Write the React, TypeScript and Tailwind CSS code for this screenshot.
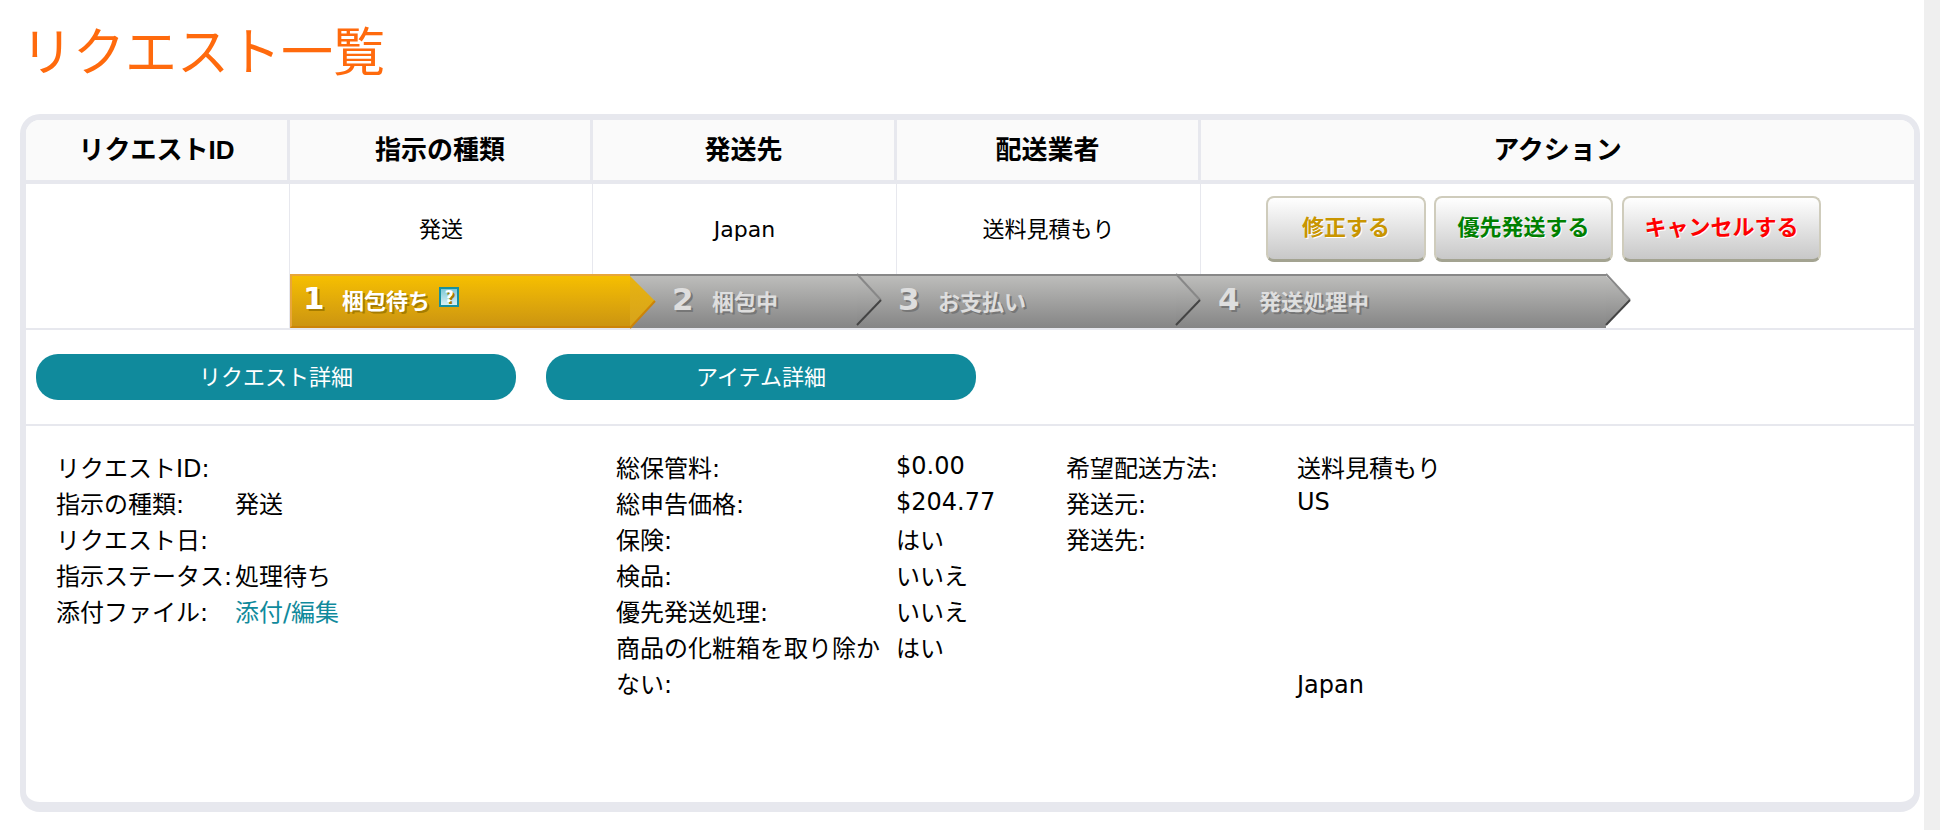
const fontBase = "font-['DejaVu_Sans','Noto_Sans_CJK_JP',sans-serif]"

const steps = [
    { n: '1', label: '梱包待ち', active: true, width: 'w-[340px]', pad: 'pl-[11px]', numW: 'w-[39px]' },
    { n: '2', label: '梱包中', active: false, width: 'w-[227px]', pad: 'pl-[42px]', numW: 'w-[40px]' },
    { n: '3', label: 'お支払い', active: false, width: 'w-[319px]', pad: 'pl-[41px]', numW: 'w-[40px]' },
    { n: '4', label: '発送処理中', active: false, width: 'w-[430px]', pad: 'pl-[42px]', numW: 'w-[41px]' },
]

const leftRows = [
    ['リクエストID:', ''],
    ['指示の種類:', '発送'],
    ['リクエスト日:', ''],
    ['指示ステータス:', '処理待ち'],
]

const midRows = [
    ['総保管料:', '$0.00', true],
    ['総申告価格:', '$204.77', true],
    ['保険:', 'はい', false],
    ['検品:', 'いいえ', false],
    ['優先発送処理:', 'いいえ', false],
    ['商品の化粧箱を取り除かない:', 'はい', false],
]

function StepArrow({ id, active }: { id: string; active: boolean }) {
    return (
        <svg className="absolute left-full -top-[2px] z-10 overflow-visible" width="26" height="56" viewBox="0 0 26 56">
            <defs>
                <linearGradient id={id} x1="0" y1="0" x2="0" y2="1">
                    <stop offset="0" stopColor={active ? '#e8b410' : '#bdbdbb'} />
                    <stop offset="1" stopColor={active ? '#d6a21c' : '#868686'} />
                </linearGradient>
            </defs>
            {active ? (
                <>
                    <polygon points="0,2 25,27 0,54" fill={`url(#${id})`} />
                    <polyline points="25,27 0,54" fill="none" stroke="#cc8408" strokeWidth="2" />
                </>
            ) : (
                <>
                    <polygon points="0,2 24,26 0,51" fill={`url(#${id})`} />
                    <polyline points="0,0 24,26" fill="none" stroke="#888888" strokeWidth="2" />
                    <polyline points="24,26 0,51" fill="none" stroke="#444444" strokeWidth="2" />
                </>
            )}
        </svg>
    )
}

function HelpIcon() {
    return (
        <span className="ml-[9px] -translate-y-[4px] w-[20px] h-[20px] border-[2px] border-[#17909f] bg-gradient-to-b from-[#7cc8d6] to-[#d8f0f4] flex items-center justify-center text-white text-[16px] leading-none font-bold">
            ?
        </span>
    )
}

export default function App() {
    return (
        <div lang="ja" className={`${fontBase} w-full h-[830px] overflow-hidden bg-white flex text-black`}>
            <div className="w-[1924px] pl-5 pr-1">
                <h1 className="h-[114px] pl-[1px] pt-[23px] text-[52px] leading-[60px] font-normal text-[#ff6a0d] font-['Liberation_Sans','Noto_Sans_CJK_JP',sans-serif]">
                    リクエスト一覧
                </h1>

                <div className="h-[698px] border-[6px] border-b-[10px] border-[#e7e8ee] rounded-[20px] overflow-hidden bg-white">
                    {/* header */}
                    <div className="h-[64px] flex bg-[#fafafa] border-b-4 border-[#e7e8ee] text-[26px] font-bold font-['Liberation_Sans','Noto_Sans_CJK_JP',sans-serif]">
                        <div className="w-[264px] border-r-[3px] border-[#e7e8ee] flex items-center justify-center">リクエストID</div>
                        <div className="w-[303px] border-r-[3px] border-[#e7e8ee] flex items-center justify-center">指示の種類</div>
                        <div className="w-[304px] border-r-[3px] border-[#e7e8ee] flex items-center justify-center">発送先</div>
                        <div className="w-[304px] border-r-[3px] border-[#e7e8ee] flex items-center justify-center">配送業者</div>
                        <div className="flex-1 flex items-center justify-center">アクション</div>
                    </div>

                    {/* request row */}
                    <div className="h-[146px] flex border-b-2 border-[#e7e8ee]">
                        <div className="w-[264px] border-r border-[#e7e8ee]" />
                        <div className="flex-1 flex flex-col">
                            <div className="h-[90px] flex text-[22px]">
                                <div className="w-[303px] border-r border-[#e7e8ee] flex items-center justify-center">発送</div>
                                <div className="w-[304px] border-r border-[#e7e8ee] flex items-center justify-center">Japan</div>
                                <div className="w-[304px] border-r border-[#e7e8ee] flex items-center justify-center">送料見積もり</div>
                                <div className="flex-1 pl-[65px] pt-3 flex gap-[8px] font-bold font-['Liberation_Sans','Noto_Sans_CJK_JP',sans-serif]">
                                    <button className="w-[160px] h-[66px] pb-[2px] rounded-lg border-2 border-b-[3px] border-[#cfccbc] border-b-[#a3a391] bg-gradient-to-b from-white to-[#c8c8c8] text-[#c99500] [text-shadow:1px_1px_0_#fff]">修正する</button>
                                    <button className="w-[179px] h-[66px] pb-[2px] rounded-lg border-2 border-b-[3px] border-[#cfccbc] border-b-[#a3a391] bg-gradient-to-b from-white to-[#c8c8c8] text-[#008000] [text-shadow:1px_1px_0_#fff]">優先発送する</button>
                                    <button className="ml-px w-[199px] h-[66px] pb-[2px] rounded-lg border-2 border-b-[3px] border-[#cfccbc] border-b-[#a3a391] bg-gradient-to-b from-white to-[#c8c8c8] text-[#ff0000] [text-shadow:1px_1px_0_#fff]">キャンセルする</button>
                                </div>
                            </div>

                            {/* progress */}
                            <div className="h-[54px] flex">
                                {steps.map((s, i) => (
                                    <div
                                        key={s.n}
                                        className={`relative ${s.width} ${s.pad} flex items-center ${
                                            s.active
                                                ? 'border-2 border-r-0 border-t-[#e8a63a] border-l-[#e8a63a] border-b-[#cc8408] bg-gradient-to-b from-[#f6bf00] to-[#cc9510] text-white [text-shadow:2px_2px_0_#a67c00]'
                                                : 'border-t-2 border-[#888888] bg-gradient-to-b from-[#bdbdbb] to-[#858585] text-[#dedede] [text-shadow:2px_2px_0_#777777]'
                                        } font-bold`}
                                        style={{ zIndex: 10 - i }}
                                    >
                                        <span className={`${s.numW} text-[31px] leading-none -translate-y-[3px]`}>{s.n}</span>
                                        <span className="text-[22px] leading-none -translate-y-[2px] font-['Noto_Sans_CJK_JP',sans-serif]">{s.label}</span>
                                        {s.active && <HelpIcon />}
                                        <StepArrow id={`arrow-${s.n}`} active={s.active} />
                                    </div>
                                ))}
                            </div>
                        </div>
                    </div>

                    {/* tabs */}
                    <div className="h-[96px] pl-[10px] pt-6 flex gap-[30px] border-b-2 border-[#e7e8ee] text-[22px] text-white">
                        <div className="w-[480px] h-[46px] rounded-[22px] bg-[#108a9c] flex items-center justify-center">リクエスト詳細</div>
                        <div className="w-[430px] h-[46px] rounded-[22px] bg-[#108a9c] flex items-center justify-center">アイテム詳細</div>
                    </div>

                    {/* details */}
                    <div className="pl-[30px] pt-[25px] flex text-[24px] leading-[36px]">
                        <div className="w-[560px] grid grid-cols-[179px_1fr] content-start">
                            {leftRows.map(([label, value]) => (
                                <div key={label} className="contents">
                                    <div className="whitespace-nowrap">{label}</div>
                                    <div>{value}</div>
                                </div>
                            ))}
                            <div>添付ファイル:</div>
                            <a href="#" className="text-[#108a9c]">添付/編集</a>
                        </div>
                        <div className="w-[450px] grid grid-cols-[280px_1fr] content-start">
                            {midRows.map(([label, value, latin]) => (
                                <div key={label as string} className="contents">
                                    <div className="pr-[8px]">{label}</div>
                                    <div className={latin ? '-translate-y-[3px]' : ''}>{value}</div>
                                </div>
                            ))}
                        </div>
                        <div className="grid grid-cols-[231px_1fr] content-start">
                            <div>希望配送方法:</div>
                            <div>送料見積もり</div>
                            <div>発送元:</div>
                            <div className="-translate-y-[3px]">US</div>
                            <div>発送先:</div>
                            <div className="pt-[144px]">Japan</div>
                        </div>
                    </div>
                </div>
            </div>
            <div className="w-4 h-full bg-[#efefef]" />
        </div>
    )
}
